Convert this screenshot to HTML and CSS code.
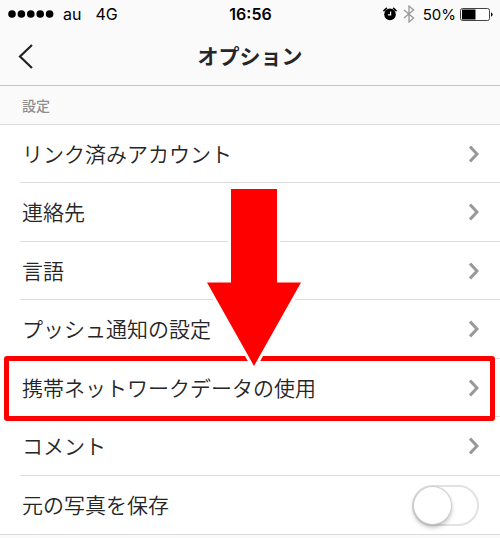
FILE: index.html
```
<!DOCTYPE html>
<html lang="ja">
  <head>
    <meta charset="utf-8">
    <meta name="viewport" content="width=device-width, initial-scale=1">
    <title>オプション</title>
    <link rel="stylesheet" href="styles.css">
  </head>

  <body>
    <div class="status-bar">
      <div class="carrier">
        <svg class="signal" width="46" height="8" viewBox="0 0 46 8">
          <circle cx="4" cy="4" r="3.8" />
          <circle cx="13.4" cy="4" r="3.8" />
          <circle cx="22.8" cy="4" r="3.8" />
          <circle cx="32.2" cy="4" r="3.8" />
          <circle cx="41.6" cy="4" r="3.8" />
        </svg>
        <span>au</span>
        <span class="network">4G</span>
      </div>
      <div class="clock">16:56</div>
      <div class="indicators">
        <svg class="alarm" width="14" height="14" viewBox="0 0 14 14">
          <circle cx="7" cy="7.4" r="5.8" />
          <path d="M1 3.6 3.4 1.4M13 3.6 10.6 1.4" stroke="#000" stroke-width="1.6" stroke-linecap="round" />
          <path d="M7.6 4.4V7.8H5" fill="none" stroke="#fafafa" stroke-width="1.2" />
        </svg>
        <svg class="bluetooth" width="12" height="18" viewBox="0 0 12 18">
          <path d="M1 5 10.6 13 6 17V1L10.6 5 1 13" fill="none" stroke="#999" stroke-width="1.3" />
        </svg>
        <span>50%</span>
        <svg class="battery" width="33" height="13" viewBox="0 0 33 13">
          <rect x="0.5" y="0.5" width="29" height="12" rx="2" fill="#fff" stroke="#444" />
          <path d="M2 1.5H15.5V11.5H2Z" />
          <path d="M31 4.2Q32.6 5 32.6 6.5T31 8.8Z" />
        </svg>
      </div>
    </div>

    <header class="nav">
      <button class="back" aria-label="戻る">
        <svg width="16" height="26" viewBox="0 0 16 26">
          <path d="M14 2 2 13.5 14 25" fill="none" stroke="#222" stroke-width="2.2" />
        </svg>
      </button>
      <h1>オプション</h1>
    </header>

    <h2 class="section-title">設定</h2>

    <div class="list">
      <a class="row" href="#">
        <span class="label">リンク済みアカウント</span>
        <svg class="chevron" viewBox="0 0 10 18"><path d="M1 1.5 8 9 1 16.5" /></svg>
      </a>
      <a class="row" href="#">
        <span class="label">連絡先</span>
        <svg class="chevron" viewBox="0 0 10 18"><path d="M1 1.5 8 9 1 16.5" /></svg>
      </a>
      <a class="row" href="#">
        <span class="label">言語</span>
        <svg class="chevron" viewBox="0 0 10 18"><path d="M1 1.5 8 9 1 16.5" /></svg>
      </a>
      <a class="row" href="#">
        <span class="label">プッシュ通知の設定</span>
        <svg class="chevron" viewBox="0 0 10 18"><path d="M1 1.5 8 9 1 16.5" /></svg>
      </a>
      <a class="row marked" href="#">
        <span class="label">携帯ネットワークデータの使用</span>
        <svg class="chevron" viewBox="0 0 10 18"><path d="M1 1.5 8 9 1 16.5" /></svg>
        <svg class="arrow" width="106" height="187" viewBox="0 0 106 187">
          <path d="M30 4H76V97.5H100L53 181 6 97.5H30Z" fill="#f00" stroke="#fff" stroke-width="6" paint-order="stroke" />
        </svg>
      </a>
      <a class="row" href="#">
        <span class="label">コメント</span>
        <svg class="chevron" viewBox="0 0 10 18"><path d="M1 1.5 8 9 1 16.5" /></svg>
      </a>
      <div class="row">
        <label class="label" for="save-original">元の写真を保存</label>
        <input class="switch" type="checkbox" id="save-original">
      </div>
    </div>
  </body>
</html>
```

FILE: styles.css
```
* {
  box-sizing: border-box;
}

body {
  margin: 0;
  background-color: #fafafa;
  color: #262626;
  font-family: "Noto Sans CJK JP", sans-serif;
}

.status-bar {
  display: grid;
  grid-template-columns: 1fr auto 1fr;
  align-items: center;
  height: 28px;
  padding: 0 7px 0 8px;
  color: #000;
  font-family: Inter, sans-serif;
  font-size: 16px;
}

.carrier,
.indicators {
  display: flex;
  align-items: center;
}

.signal {
  margin-right: 9px;
}

.network {
  margin-left: 14px;
}

.clock {
  font-weight: 600;
}

.indicators {
  justify-content: flex-end;
  font-size: 15px;
}

.bluetooth {
  margin: 0 8px 0 6px;
}

.battery {
  margin-left: 4px;
}

.nav {
  display: grid;
  grid-template-columns: 60px 1fr 60px;
  align-items: center;
  height: 58px;
  padding-bottom: 2px;
  border-bottom: 1px solid #c4c4c4;
}

.back {
  display: flex;
  padding: 0 0 0 18px;
  border: none;
  background: none;
}

h1 {
  margin: 0;
  padding-bottom: 2px;
  font-size: 21px;
  font-weight: bold;
  line-height: 30px;
  text-align: center;
}

.section-title {
  margin: 0;
  padding: 0 22px;
  border-bottom: 1px solid #dbdbdb;
  color: #8e8e8e;
  font-size: 14px;
  font-weight: 500;
  line-height: 38px;
}

.list {
  background-color: #fff;
  border-bottom: 1px solid #dbdbdb;
}

.row {
  position: relative;
  display: flex;
  align-items: center;
  justify-content: space-between;
  height: 58px;
  margin-left: 20px;
  padding: 0 21px 0 2px;
  border-bottom: 1px solid #dbdbdb;
  color: #262626;
  font-size: 21px;
  font-weight: 350;
  text-decoration: none;
}

.row:nth-child(even) {
  height: 59px;
}

.row:last-child {
  border-bottom: none;
}

.label {
  padding-bottom: 2px;
}

.chevron {
  width: 10px;
  height: 18px;
  fill: none;
  stroke: #999;
  stroke-width: 3;
}

.marked {
  z-index: 1;
}

.marked::after {
  content: "";
  position: absolute;
  top: -3px;
  right: 5px;
  bottom: -5px;
  left: -16px;
  border: 5px solid #f00;
  border-radius: 3px;
}

.arrow {
  position: absolute;
  bottom: 44px;
  left: 50%;
  z-index: 1;
  margin-left: -59px;
}

.switch {
  appearance: none;
  width: 67px;
  height: 41px;
  margin: 0;
  border: 2px solid #e2e2e2;
  border-radius: 21px;
  background-color: #fff;
}

.switch::before {
  content: "";
  display: block;
  width: 37px;
  height: 37px;
  border-radius: 50%;
  background-color: #fff;
  box-shadow: 0 0 1px 1px #ccc, 0 3px 5px rgba(0, 0, 0, 0.3);
}

.switch:checked::before {
  margin-left: 26px;
}
```
